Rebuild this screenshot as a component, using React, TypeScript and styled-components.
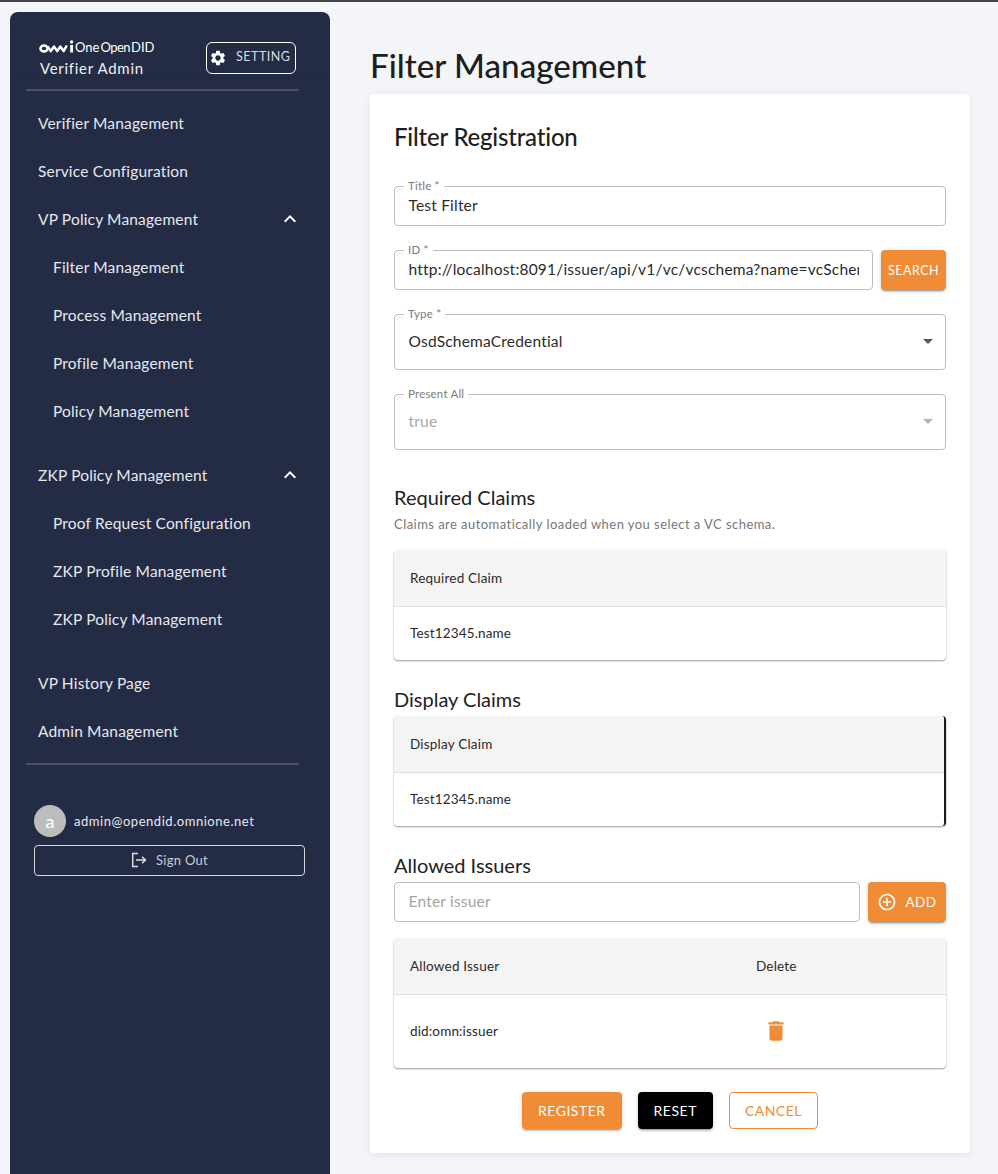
import React from "react";
import styled, { createGlobalStyle } from "styled-components";

const Global = createGlobalStyle`
  html, body { margin: 0; padding: 0; background: #f4f5f8; }
  * { box-sizing: border-box; }
  body { font-family: "Lato", "Noto Sans", sans-serif; color: #1f1f1f; }
`;

const Page = styled.div`
  width: 998px;
  height: 1174px;
  overflow: hidden;
  border-top: 2px solid #454545;
  display: flex;
  align-items: flex-start;
  padding: 10px 0 0 10px;
`;

const Sidebar = styled.aside`
  flex: 0 0 320px;
  height: 1200px;
  background: #232b45;
  border-radius: 8px 8px 0 0;
  color: #fff;
`;

const SideHead = styled.div`
  height: 66px;
  border-bottom: 1px solid #1f2740;
  padding: 28px 34px 0 29px;
  display: flex;
  justify-content: space-between;
  align-items: flex-start;
`;

const Brand = styled.div`
  display: flex;
  flex-direction: column;
`;

const LogoRow = styled.div`
  display: flex;
  align-items: center;
  gap: 1px;
  height: 14px;
`;

const LogoText = styled.span`
  font-size: 13px;
  font-weight: 400;
  line-height: 14px;
  white-space: nowrap;
`;

const LogoCondensed = styled.span`
  display: inline-block;
  margin: 0 1px;
  font-size: 13px;
  letter-spacing: -0.5px;
`;

const AdminName = styled.div`
  font-size: 15px;
  line-height: 20px;
  letter-spacing: 0.7px;
  margin: 4px 0 0 1px;
  color: #eef0f4;
`;

const SettingButton = styled.button`
  width: 90px;
  height: 32px;
  margin-top: 2px;
  background: transparent;
  border: 1px solid #fff;
  border-radius: 6px;
  color: #d8dbe2;
  display: flex;
  align-items: center;
  gap: 9px;
  padding: 0 0 0 2px;
  font-family: inherit;
  font-size: 12.5px;
  letter-spacing: 0.5px;
`;

const SettingLabel = styled.span`
  padding-bottom: 3px;
`;

const Divider = styled.div<{ $top?: number }>`
  height: 2px;
  margin: ${(p) => p.$top ?? 0}px 31px 0 16px;
  background: #4a5064;
`;

const Nav = styled.nav`
  padding: 8px 0 8px;
  display: flex;
  flex-direction: column;
`;

const NavItem = styled.div<{ $sub?: boolean; $gapBefore?: boolean }>`
  height: 48px;
  display: flex;
  align-items: center;
  justify-content: space-between;
  padding: 0 28px 0 ${(p) => (p.$sub ? "43px" : "28px")};
  font-size: 15.5px;
  letter-spacing: 0.17px;
  color: #e6e8ed;
  margin-top: ${(p) => (p.$gapBefore ? "16px" : "0")};
`;

const UserArea = styled.div`
  padding: 40px 25px 0 24px;
  display: flex;
  flex-direction: column;
  gap: 8px;
`;

const UserRow = styled.div`
  display: flex;
  align-items: center;
  gap: 8px;
`;

const Avatar = styled.div`
  width: 32px;
  height: 32px;
  border-radius: 50%;
  background: #bdbdbd;
  color: #fff;
  display: flex;
  align-items: center;
  justify-content: center;
  font-size: 18px;
`;

const UserMail = styled.span`
  font-size: 13px;
  letter-spacing: 0.54px;
  color: #e6e8ed;
`;

const SignOut = styled.button`
  height: 31px;
  background: transparent;
  border: 1px solid #d5d8df;
  border-radius: 4px;
  color: #c9ccd4;
  display: flex;
  align-items: center;
  justify-content: center;
  gap: 9px;
  padding: 0 0 2px;
  font-family: inherit;
  font-size: 13px;
  letter-spacing: 0.3px;
`;

const Main = styled.main`
  flex: 0 0 600px;
  width: 600px;
  min-width: 0;
  margin-left: 40px;
`;

const PageTitle = styled.h1`
  margin: 0;
  height: 82px;
  padding-top: 31px;
  font-size: 33.2px;
  line-height: 44px;
  font-weight: 500;
  color: #1e1e1e;
`;

const Card = styled.section`
  background: #fff;
  border-radius: 4px;
  box-shadow: 0 2px 10px rgba(0, 0, 0, 0.07);
  height: 1059px;
  padding: 24px;
`;

const CardTitle = styled.h2`
  margin: 0;
  font-size: 24px;
  line-height: 38px;
  font-weight: 500;
  letter-spacing: -0.2px;
  color: #1e1e1e;
`;

const Fields = styled.div`
  margin-top: 30px;
  display: flex;
  flex-direction: column;
  gap: 24px;
`;

const FieldRow = styled.div<{ $top?: number }>`
  display: flex;
  gap: 8px;
  margin-top: ${(p) => p.$top ?? 0}px;
`;

const Outline = styled.div<{ $tall?: boolean; $disabled?: boolean }>`
  position: relative;
  height: ${(p) => (p.$tall ? "56px" : "40px")};
  border: 1px solid #bdbdbd;
  border-radius: 4px;
  padding: 0 13.5px 2px;
  display: flex;
  align-items: center;
  justify-content: space-between;
  font-size: 15.5px;
  letter-spacing: 0.2px;
  color: ${(p) => (p.$disabled ? "#a8a8a8" : "#2b2b2b")};
  background: #fff;
`;

const RowOutline = styled(Outline)`
  flex: 1;
  min-width: 0;
`;

const FieldLabel = styled.span`
  position: absolute;
  left: 9px;
  top: -8px;
  padding: 0 4px;
  background: #fff;
  font-size: 11.5px;
  line-height: 13px;
  letter-spacing: 0.2px;
  color: #7a7a7a;
`;

const ClipText = styled.span`
  overflow: hidden;
  white-space: nowrap;
`;

const Placeholder = styled.span`
  color: #a3a3a3;
`;

const Caret = styled.span<{ $disabled?: boolean }>`
  width: 0;
  height: 0;
  margin-right: -1px;
  border-left: 5px solid transparent;
  border-right: 5px solid transparent;
  border-top: 5px solid ${(p) => (p.$disabled ? "#b5b5b5" : "#555")};
`;

const SolidButton = styled.button<{ $tone?: "orange" | "black" }>`
  height: 37px;
  border: 0;
  border-radius: 4px;
  padding: 0 16px;
  background: ${(p) => (p.$tone === "black" ? "#000" : "#f08c36")};
  color: #fff;
  font-family: inherit;
  font-size: 14px;
  letter-spacing: 0.5px;
  box-shadow: 0 3px 1px -2px rgba(0, 0, 0, 0.2), 0 2px 2px 0 rgba(0, 0, 0, 0.14), 0 1px 5px 0 rgba(0, 0, 0, 0.12);
`;

const SearchButton = styled(SolidButton)`
  flex: 0 0 65px;
  height: 40px;
  padding: 0;
  font-size: 12.5px;
`;

const AddButton = styled(SolidButton)`
  flex: 0 0 78px;
  height: 40px;
  padding: 0;
  display: flex;
  align-items: center;
  justify-content: center;
  gap: 8px;
  font-size: 13.5px;
`;

const SectionTitle = styled.h3<{ $top: number }>`
  margin: ${(p) => p.$top}px 0 0;
  font-size: 20px;
  line-height: 28px;
  font-weight: 400;
  color: #222;
`;

const Hint = styled.p`
  margin: 5px 0 0;
  font-size: 13px;
  line-height: 16px;
  letter-spacing: 0.45px;
  color: #777;
`;

const TableBox = styled.div<{ $top: number; $edge?: boolean }>`
  margin-top: ${(p) => p.$top}px;
  border-radius: 4px;
  overflow: hidden;
  background: #fff;
  box-shadow: 0 1px 2px rgba(0, 0, 0, 0.4);
  ${(p) => (p.$edge ? "border-right: 2px solid #1b1b1b;" : "")}
`;

const Table = styled.table`
  width: 100%;
  border-collapse: collapse;
  table-layout: fixed;
`;

const HeadCell = styled.th`
  height: 56px;
  padding: 0 16px;
  background: #f4f4f4;
  border-bottom: 1px solid #e0e0e0;
  text-align: left;
  font-size: 13.5px;
  font-weight: 400;
  letter-spacing: 0.2px;
  color: #2a2a2a;
`;

const BodyCell = styled.td<{ $tall?: boolean }>`
  height: ${(p) => (p.$tall ? "74px" : "54px")};
  padding: 0 16px;
  font-size: 13.5px;
  letter-spacing: 0.15px;
  color: #2a2a2a;
`;

const IconCol = styled.col`
  width: 206px;
`;

const TrashIcon = styled.svg`
  display: block;
  width: 26px;
  height: 26px;
  margin-left: 7px;
  fill: #f08c36;
`;

const Actions = styled.div`
  margin-top: 24px;
  display: flex;
  justify-content: center;
  gap: 16px;
`;

const CancelButton = styled.button`
  height: 37px;
  width: 89px;
  padding: 0;
  background: #fff;
  border: 1px solid #f08c36;
  border-radius: 4px;
  color: #f08c36;
  font-family: inherit;
  font-size: 14px;
  letter-spacing: 0.45px;
`;

const Chevron = () => (
  <svg width="24" height="24" viewBox="0 0 24 24" fill="#fff">
    <path d="M12 8l-6 6 1.41 1.41L12 10.83l4.59 4.58L18 14z" />
  </svg>
);

const OmniMark = () => (
  <svg width="35" height="14" viewBox="0 0 35 14" fill="none" stroke="#fff" strokeWidth="2.5">
    <ellipse cx="5" cy="8.5" rx="3.6" ry="3" />
    <path d="M8.6 6.5l3.2 4.6 3.2-4.6 3.2 4.6 3.2-4.6 3.2 4.6 3.2-5.6" strokeLinejoin="round" />
    <path d="M32.6 5v7.5" strokeWidth="2.8" />
    <circle cx="32.6" cy="2" r="1.7" fill="#fff" stroke="none" />
  </svg>
);

const Gear = () => (
  <svg width="18" height="18" viewBox="0 0 24 24" fill="#fff">
    <path d="M19.14 12.94c.04-.3.06-.61.06-.94 0-.32-.02-.64-.07-.94l2.03-1.58c.18-.14.23-.41.12-.61l-1.92-3.32c-.12-.22-.37-.29-.59-.22l-2.39.96c-.5-.38-1.03-.7-1.62-.94l-.36-2.54c-.04-.24-.24-.41-.48-.41h-3.84c-.24 0-.43.17-.47.41l-.36 2.54c-.59.24-1.13.57-1.62.94l-2.39-.96c-.22-.08-.47 0-.59.22L2.74 8.87c-.12.21-.08.47.12.61l2.03 1.58c-.05.3-.09.63-.09.94s.02.64.07.94l-2.03 1.58c-.18.14-.23.41-.12.61l1.92 3.32c.12.22.37.29.59.22l2.39-.96c.5.38 1.03.7 1.62.94l.36 2.54c.05.24.24.41.48.41h3.84c.24 0 .44-.17.47-.41l.36-2.54c.59-.24 1.13-.56 1.62-.94l2.39.96c.22.08.47 0 .59-.22l1.92-3.32c.12-.22.07-.47-.12-.61l-2.01-1.58zM12 15.6c-1.98 0-3.6-1.62-3.6-3.6s1.62-3.6 3.6-3.6 3.6 1.62 3.6 3.6-1.62 3.6-3.6 3.6z" />
  </svg>
);

const LogoutIcon = () => (
  <svg width="16" height="16" viewBox="0 0 16 16" fill="none" stroke="#e0e2e8" strokeWidth="1.4">
    <path d="M7 1.5H1.7v13H7" />
    <path d="M5 8h9.5M11 4.8 14.5 8 11 11.2" />
  </svg>
);

const AddCircle = () => (
  <svg width="20" height="20" viewBox="0 0 24 24" fill="#fff">
    <path d="M13 7h-2v4H7v2h4v4h2v-4h4v-2h-4V7zm-1-5C6.48 2 2 6.48 2 12s4.48 10 10 10 10-4.48 10-10S17.52 2 12 2zm0 18c-4.41 0-8-3.59-8-8s3.59-8 8-8 8 3.59 8 8-3.59 8-8 8z" />
  </svg>
);

export default function App() {
  return (
    <>
      <Global />
      <Page>
        <Sidebar>
          <SideHead>
            <Brand>
              <LogoRow>
                <OmniMark />
                <LogoText>
                  One<LogoCondensed>Open</LogoCondensed>DID
                </LogoText>
              </LogoRow>
              <AdminName>Verifier Admin</AdminName>
            </Brand>
            <SettingButton>
              <Gear />
              <SettingLabel>SETTING</SettingLabel>
            </SettingButton>
          </SideHead>
          <Divider $top={11} />
          <Nav>
            <NavItem>Verifier Management</NavItem>
            <NavItem>Service Configuration</NavItem>
            <NavItem>
              VP Policy Management
              <Chevron />
            </NavItem>
            <NavItem $sub>Filter Management</NavItem>
            <NavItem $sub>Process Management</NavItem>
            <NavItem $sub>Profile Management</NavItem>
            <NavItem $sub>Policy Management</NavItem>
            <NavItem $gapBefore>
              ZKP Policy Management
              <Chevron />
            </NavItem>
            <NavItem $sub>Proof Request Configuration</NavItem>
            <NavItem $sub>ZKP Profile Management</NavItem>
            <NavItem $sub>ZKP Policy Management</NavItem>
            <NavItem $gapBefore>VP History Page</NavItem>
            <NavItem>Admin Management</NavItem>
          </Nav>
          <Divider />
          <UserArea>
            <UserRow>
              <Avatar>a</Avatar>
              <UserMail>admin@opendid.omnione.net</UserMail>
            </UserRow>
            <SignOut>
              <LogoutIcon />
              Sign Out
            </SignOut>
          </UserArea>
        </Sidebar>
        <Main>
          <PageTitle>Filter Management</PageTitle>
          <Card>
            <CardTitle>Filter Registration</CardTitle>
            <Fields>
              <Outline>
                <FieldLabel>Title *</FieldLabel>
                Test Filter
              </Outline>
              <FieldRow>
                <RowOutline>
                  <FieldLabel>ID *</FieldLabel>
                  <ClipText>http://localhost:8091/issuer/api/v1/vc/vcschema?name=vcSchema</ClipText>
                </RowOutline>
                <SearchButton>SEARCH</SearchButton>
              </FieldRow>
              <Outline $tall>
                <FieldLabel>Type *</FieldLabel>
                OsdSchemaCredential
                <Caret />
              </Outline>
              <Outline $tall $disabled>
                <FieldLabel>Present All</FieldLabel>
                true
                <Caret $disabled />
              </Outline>
            </Fields>
            <SectionTitle $top={33}>Required Claims</SectionTitle>
            <Hint>Claims are automatically loaded when you select a VC schema.</Hint>
            <TableBox $top={18}>
              <Table>
                <thead>
                  <tr>
                    <HeadCell>Required Claim</HeadCell>
                  </tr>
                </thead>
                <tbody>
                  <tr>
                    <BodyCell>Test12345.name</BodyCell>
                  </tr>
                </tbody>
              </Table>
            </TableBox>
            <SectionTitle $top={25}>Display Claims</SectionTitle>
            <TableBox $top={3} $edge>
              <Table>
                <thead>
                  <tr>
                    <HeadCell>Display Claim</HeadCell>
                  </tr>
                </thead>
                <tbody>
                  <tr>
                    <BodyCell>Test12345.name</BodyCell>
                  </tr>
                </tbody>
              </Table>
            </TableBox>
            <SectionTitle $top={25}>Allowed Issuers</SectionTitle>
            <FieldRow $top={3}>
              <RowOutline>
                <Placeholder>Enter issuer</Placeholder>
              </RowOutline>
              <AddButton>
                <AddCircle />
                ADD
              </AddButton>
            </FieldRow>
            <TableBox $top={16}>
              <Table>
                <colgroup>
                  <col />
                  <IconCol />
                </colgroup>
                <thead>
                  <tr>
                    <HeadCell>Allowed Issuer</HeadCell>
                    <HeadCell>Delete</HeadCell>
                  </tr>
                </thead>
                <tbody>
                  <tr>
                    <BodyCell $tall>did:omn:issuer</BodyCell>
                    <BodyCell $tall>
                      <TrashIcon viewBox="0 0 24 24">
                        <path d="M6 19c0 1.1.9 2 2 2h8c1.1 0 2-.9 2-2V7H6v12zM19 4h-3.5l-1-1h-5l-1 1H5v2h14V4z" />
                      </TrashIcon>
                    </BodyCell>
                  </tr>
                </tbody>
              </Table>
            </TableBox>
            <Actions>
              <SolidButton>REGISTER</SolidButton>
              <SolidButton $tone="black">RESET</SolidButton>
              <CancelButton>CANCEL</CancelButton>
            </Actions>
          </Card>
        </Main>
      </Page>
    </>
  );
}
